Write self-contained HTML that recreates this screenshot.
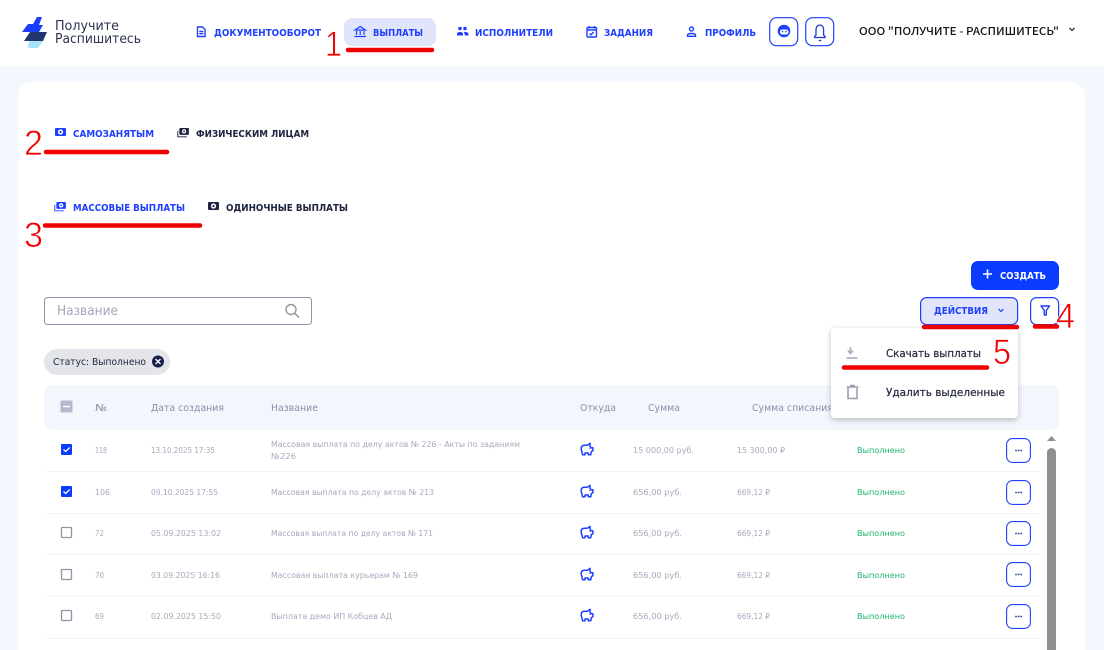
<!DOCTYPE html>
<html lang="ru">
<head>
<meta charset="utf-8">
<title>Выплаты</title>
<style>
html,body{margin:0;padding:0;width:1104px;height:650px;overflow:hidden;background:#f5f7fe}
svg{display:block;font-family:"DejaVu Sans","Liberation Sans",sans-serif}
.nav{font-size:9.500px;font-weight:700;fill:#1f3fff}
.tabd{font-size:9.500px;font-weight:700;fill:#1d2340}
.h{font-size:9.500px;fill:#8a8fa6}
.r{font-size:8.200px;fill:#a6aabc}
.g{font-size:8.200px;fill:#1fb56c}
.red{font-family:"Liberation Sans",sans-serif;font-size:35px;fill:#f00000;stroke:#fff;stroke-width:.7}
.ib{fill:none;stroke:#1f3fff;stroke-width:1.4}
.rl{stroke:#f00000;stroke-width:4.5;stroke-linecap:round}
</style>
</head>
<body>
<svg width="1104" height="650" viewBox="0 0 1104 650" xmlns="http://www.w3.org/2000/svg">
<defs>
<filter id="sh" x="-10%" y="-10%" width="120%" height="125%"><feDropShadow dx="0" dy="2" stdDeviation="3" flood-color="#000" flood-opacity=".25"/></filter>
<symbol id="pig" viewBox="0 0 14 14" overflow="visible"><path d="M1.200 6.500Q1.200 3.200 4.500 3.200H7.500L10 1.300V4.200L11.200 5.700H12.900V8.700L11.300 9.600 10.800 12.700H8.300V11H5V12.700H2.500L2 10Q1.200 8.500 1.200 6.500Z" fill="#fff" stroke="#1f3fff" stroke-width="1.500" stroke-linejoin="round"/><circle cx="10" cy="6.300" r=".7" fill="#1f3fff"/></symbol>
<symbol id="dots" viewBox="0 0 25 25"><rect x=".6" y=".6" width="23.8" height="23.8" rx="6" fill="#fff" stroke="#1f3fff" stroke-width="1.1"/><path d="M9.200 12.500h1.600M11.800 12.500h1.600M14.400 12.500h1.600" stroke="#1f3fa0" stroke-width="1.600"/></symbol>
<symbol id="cash" viewBox="0 0 11 8"><rect width="11" height="8" rx="1"/><circle cx="5.500" cy="4" r="2.600" fill="#fff"/><circle cx="5.500" cy="4" r="1.100"/></symbol>
<symbol id="cashs" viewBox="0 0 13 11"><rect x="2.500" width="10.500" height="7.500" rx="1"/><circle cx="7.700" cy="3.700" r="2.400" fill="#fff"/><circle cx="7.700" cy="3.700" r="1"/><path d="M.7 3v6.600h10" fill="none" stroke="currentColor" stroke-width="1.400"/></symbol>
</defs>

<rect width="1104" height="650" fill="#f5f7fe"/>
<rect width="1104" height="66" fill="#fff"/>
<rect x="18" y="82" width="1067" height="600" rx="14" fill="#fff"/>

<!-- logo -->
<path d="M37 17h5l-3 8h4l-4 7H22l6-8h5z" fill="#1a3dfa"/>
<path d="M30 32h17l-4 9H24z" fill="#24366f"/>
<path d="M29 41h14l-5 7h-10z" fill="#a9e2fb"/>
<text x="55" y="30" font-size="13" fill="#2b3350" textLength="64" lengthAdjust="spacingAndGlyphs">Получите</text>
<text x="55" y="43" font-size="13" fill="#2b3350" textLength="86" lengthAdjust="spacingAndGlyphs">Распишитесь</text>

<!-- nav -->
<rect x="344" y="18" width="92" height="28" rx="8" fill="#e0e5fb"/>
<path d="M197.500 27h5l2.500 2.500V36.500h-7.500z" class="ib"/><path d="M199.300 31.500h4M199.300 33.700h4" class="ib" stroke-width="1"/>
<text x="214" y="36" class="nav" textLength="107" lengthAdjust="spacingAndGlyphs">ДОКУМЕНТООБОРОТ</text>
<path d="M355 30h10.500l-5.250-3.500zM356.500 31v4M360.200 31v4M364 31v4M354.500 36.500h11.500" fill="none" stroke="#1f3fff" stroke-width="1.200"/>
<text x="373" y="36" class="nav" textLength="50" lengthAdjust="spacingAndGlyphs">ВЫПЛАТЫ</text>
<circle cx="460" cy="28.500" r="1.800" fill="#1f3fff"/><circle cx="465" cy="28.500" r="1.800" fill="#1f3fff"/><path d="M457 35.500v-1.500q0-2 3-2t3 2v1.500zM464 32q3.500-.5 4.500 2v1.500H465" fill="#1f3fff"/>
<text x="475" y="36" class="nav" textLength="78" lengthAdjust="spacingAndGlyphs">ИСПОЛНИТЕЛИ</text>
<rect x="587" y="27.500" width="9.500" height="9.500" rx="1" class="ib" stroke-width="1.200"/><path d="M587 30h9.500M589 26v2.500M594.500 26v2.500M589.500 33.500l1.500 1.300 2.600-2.800" class="ib" stroke-width="1"/>
<text x="604" y="36" class="nav" textLength="49" lengthAdjust="spacingAndGlyphs">ЗАДАНИЯ</text>
<circle cx="691.500" cy="29" r="2" class="ib" stroke-width="1.200"/><path d="M687.500 36.300v-1q0-1.800 4-1.800t4 1.800v1z" class="ib" stroke-width="1.200"/>
<text x="705" y="36" class="nav" textLength="51" lengthAdjust="spacingAndGlyphs">ПРОФИЛЬ</text>

<rect x="769.700" y="17.700" width="28" height="28" rx="7" fill="#fff" stroke="#1f3fff" stroke-width="1.200"/>
<circle cx="784" cy="31" r="6.300" fill="#1f3fff"/><rect x="780" y="29.500" width="8.500" height="5" rx="2.300" fill="#fff"/><circle cx="782.500" cy="31.500" r=".8" fill="#1f3fff"/><circle cx="786" cy="31.500" r=".8" fill="#1f3fff"/>
<rect x="805.700" y="17.700" width="28" height="28" rx="7" fill="#fff" stroke="#1f3fff" stroke-width="1.200"/>
<path d="M814.500 37.500v-1l1.500-1.500v-5.500q.2-4 3.800-4.500 3.600.5 3.800 4.500V35l1.500 1.500v1z" fill="none" stroke="#2035d8" stroke-width="1.300"/><path d="M818.700 40.500h2.600" stroke="#2035d8" stroke-width="1.300"/>
<text x="859" y="35" font-size="11" font-weight="500" fill="#141414" style="font-family:'Noto Sans CJK SC','Liberation Sans',sans-serif" textLength="200" lengthAdjust="spacingAndGlyphs">ООО "ПОЛУЧИТЕ - РАСПИШИТЕСЬ"</text>
<path d="M1069.500 28l2.500 2.500 2.500-2.500" fill="none" stroke="#333" stroke-width="1.300"/>

<!-- tabs -->
<use href="#cash" x="55" y="128" width="11" height="8" fill="#1f3fff"/>
<text x="73" y="137" class="nav" textLength="81" lengthAdjust="spacingAndGlyphs">САМОЗАНЯТЫМ</text>
<use href="#cashs" x="177" y="128" width="12" height="10" fill="#1d2340" color="#5a6078"/>
<text x="196" y="137" class="tabd" textLength="113" lengthAdjust="spacingAndGlyphs">ФИЗИЧЕСКИМ ЛИЦАМ</text>
<use href="#cashs" x="54" y="202" width="12" height="10" fill="#1f3fff" color="#5f78ff"/>
<text x="73" y="211" class="nav" textLength="112" lengthAdjust="spacingAndGlyphs">МАССОВЫЕ ВЫПЛАТЫ</text>
<use href="#cash" x="208" y="202" width="11" height="8" fill="#1d2340"/>
<text x="226" y="211" class="tabd" textLength="122" lengthAdjust="spacingAndGlyphs">ОДИНОЧНЫЕ ВЫПЛАТЫ</text>

<!-- create -->
<rect x="971" y="261" width="88" height="29" rx="7" fill="#0a3cff"/>
<path d="M983 274h9M987.500 269.500v9" stroke="#fff" stroke-width="1.600"/>
<text x="1000" y="279" font-size="9.500" font-weight="700" fill="#fff" textLength="46" lengthAdjust="spacingAndGlyphs">СОЗДАТЬ</text>

<!-- search -->
<rect x="44.500" y="297.500" width="267" height="27" rx="3" fill="#fff" stroke="#8f94a8"/>
<text x="57" y="315" font-size="13" fill="#a3a7b9" textLength="61" lengthAdjust="spacingAndGlyphs">Название</text>
<circle cx="291" cy="309.500" r="5" fill="none" stroke="#92969f" stroke-width="1.400"/><path d="M294.500 313l4.500 4.500" stroke="#92969f" stroke-width="1.500"/>

<!-- actions -->
<rect x="920.600" y="297.600" width="97" height="27" rx="6" fill="#e0e5fb" stroke="#1f3fff" stroke-width="1.200"/>
<text x="934" y="314" class="nav" textLength="54" lengthAdjust="spacingAndGlyphs">ДЕЙСТВИЯ</text>
<path d="M998.500 309l2.500 2.500 2.500-2.500" fill="none" stroke="#1f3fff" stroke-width="1.200"/>
<rect x="1030.600" y="297.600" width="28" height="27" rx="6" fill="#fff" stroke="#1f3fff" stroke-width="1.200"/>
<path d="M1041 306h8.500l-3.200 4.500v4.500h-2v-4.500z" fill="none" stroke="#1f3fff" stroke-width="1.400" stroke-linejoin="round"/>

<!-- chip -->
<rect x="44" y="349" width="126" height="26" rx="13" fill="#e4e5ea"/>
<text x="53" y="365" font-size="9.500" fill="#20263f" textLength="93" lengthAdjust="spacingAndGlyphs">Статус: Выполнено</text>
<circle cx="158" cy="361.500" r="6" fill="#161f4a"/><path d="M155.500 359l5 5M160.500 359l-5 5" stroke="#fff" stroke-width="1.300"/>

<!-- table head -->
<rect x="44" y="385" width="1015" height="45" rx="8" fill="#f4f6fe"/>
<rect x="60.500" y="400.500" width="12" height="12" rx="1.500" fill="#b4b9cb"/><path d="M63 406.500h7" stroke="#fff" stroke-width="1.500"/>
<text x="95" y="411" class="h" textLength="12" lengthAdjust="spacingAndGlyphs">№</text>
<text x="151" y="411" class="h" textLength="73" lengthAdjust="spacingAndGlyphs">Дата создания</text>
<text x="271" y="411" class="h" textLength="47" lengthAdjust="spacingAndGlyphs">Название</text>
<text x="580" y="411" class="h" textLength="36" lengthAdjust="spacingAndGlyphs">Откуда</text>
<text x="648" y="411" class="h" textLength="32" lengthAdjust="spacingAndGlyphs">Сумма</text>
<text x="752" y="411" class="h" textLength="81" lengthAdjust="spacingAndGlyphs">Сумма списания</text>

<!-- dividers -->
<path d="M44 471.500H1040M44 513.500H1040M44 554.500H1040M44 596.500H1040M44 638.500H1040" stroke="#f4f5f9"/>

<!-- row 1 -->
<rect x="61" y="444" width="11" height="11" rx="1" fill="#0a3cff"/><path d="M63.500 449.500l2.200 2 4-4" fill="none" stroke="#fff" stroke-width="1.300"/>
<text x="95" y="453" class="r" textLength="12" lengthAdjust="spacingAndGlyphs">118</text>
<text x="151" y="453" class="r" textLength="64" lengthAdjust="spacingAndGlyphs">13.10.2025 17:35</text>
<text x="271" y="447" class="r" textLength="249" lengthAdjust="spacingAndGlyphs">Массовая выплата по делу актов № 226 - Акты по заданиям</text>
<text x="271" y="459" class="r" textLength="25" lengthAdjust="spacingAndGlyphs">№226</text>
<use href="#pig" x="580" y="442" width="14" height="14"/>
<text x="633" y="453" class="r" textLength="61" lengthAdjust="spacingAndGlyphs">15 000,00 руб.</text>
<text x="737" y="453" class="r" textLength="48" lengthAdjust="spacingAndGlyphs">15 300,00 ₽</text>
<text x="857" y="453" class="g" textLength="48" lengthAdjust="spacingAndGlyphs">Выполнено</text>
<use href="#dots" x="1006" y="438" width="25" height="25"/>

<!-- row 2 -->
<rect x="61" y="486" width="11" height="11" rx="1" fill="#0a3cff"/><path d="M63.500 491.500l2.200 2 4-4" fill="none" stroke="#fff" stroke-width="1.300"/>
<text x="95" y="495" class="r" textLength="15" lengthAdjust="spacingAndGlyphs">106</text>
<text x="151" y="495" class="r" textLength="67" lengthAdjust="spacingAndGlyphs">09.10.2025 17:55</text>
<text x="271" y="495" class="r" textLength="163" lengthAdjust="spacingAndGlyphs">Массовая выплата по делу актов № 213</text>
<use href="#pig" x="580" y="484" width="14" height="14"/>
<text x="633" y="495" class="r" textLength="49" lengthAdjust="spacingAndGlyphs">656,00 руб.</text>
<text x="737" y="495" class="r" textLength="33" lengthAdjust="spacingAndGlyphs">669,12 ₽</text>
<text x="857" y="495" class="g" textLength="48" lengthAdjust="spacingAndGlyphs">Выполнено</text>
<use href="#dots" x="1006" y="480" width="25" height="25"/>

<!-- row 3 -->
<rect x="61.500" y="527.500" width="10" height="10" rx="1" fill="#fff" stroke="#8f94a8" stroke-width="1.300"/>
<text x="95" y="536" class="r" textLength="9" lengthAdjust="spacingAndGlyphs">72</text>
<text x="151" y="536" class="r" textLength="70" lengthAdjust="spacingAndGlyphs">05.09.2025 13:02</text>
<text x="271" y="536" class="r" textLength="162" lengthAdjust="spacingAndGlyphs">Массовая выплата по делу актов № 171</text>
<use href="#pig" x="580" y="525" width="14" height="14"/>
<text x="633" y="536" class="r" textLength="49" lengthAdjust="spacingAndGlyphs">656,00 руб.</text>
<text x="737" y="536" class="r" textLength="33" lengthAdjust="spacingAndGlyphs">669,12 ₽</text>
<text x="857" y="536" class="g" textLength="48" lengthAdjust="spacingAndGlyphs">Выполнено</text>
<use href="#dots" x="1006" y="521" width="25" height="25"/>

<!-- row 4 -->
<rect x="61.500" y="569.500" width="10" height="10" rx="1" fill="#fff" stroke="#8f94a8" stroke-width="1.300"/>
<text x="95" y="578" class="r" textLength="9" lengthAdjust="spacingAndGlyphs">70</text>
<text x="151" y="578" class="r" textLength="69" lengthAdjust="spacingAndGlyphs">03.09.2025 16:16</text>
<text x="271" y="578" class="r" textLength="147" lengthAdjust="spacingAndGlyphs">Массовая выплата курьерам № 169</text>
<use href="#pig" x="580" y="567" width="14" height="14"/>
<text x="633" y="578" class="r" textLength="49" lengthAdjust="spacingAndGlyphs">656,00 руб.</text>
<text x="737" y="578" class="r" textLength="33" lengthAdjust="spacingAndGlyphs">669,12 ₽</text>
<text x="857" y="578" class="g" textLength="48" lengthAdjust="spacingAndGlyphs">Выполнено</text>
<use href="#dots" x="1006" y="562" width="25" height="25"/>

<!-- row 5 -->
<rect x="61.500" y="610.500" width="10" height="10" rx="1" fill="#fff" stroke="#8f94a8" stroke-width="1.300"/>
<text x="95" y="619" class="r" textLength="9" lengthAdjust="spacingAndGlyphs">69</text>
<text x="151" y="619" class="r" textLength="70" lengthAdjust="spacingAndGlyphs">02.09.2025 15:50</text>
<text x="271" y="619" class="r" textLength="121" lengthAdjust="spacingAndGlyphs">Выплата демо ИП Кобцев АД</text>
<use href="#pig" x="580" y="608" width="14" height="14"/>
<text x="633" y="619" class="r" textLength="49" lengthAdjust="spacingAndGlyphs">656,00 руб.</text>
<text x="737" y="619" class="r" textLength="33" lengthAdjust="spacingAndGlyphs">669,12 ₽</text>
<text x="857" y="619" class="g" textLength="48" lengthAdjust="spacingAndGlyphs">Выполнено</text>
<use href="#dots" x="1006" y="604" width="25" height="25"/>

<!-- scrollbar -->
<path d="M1047 441l4.500-5 4.500 5z" fill="#8f8f8f"/>
<rect x="1047" y="448" width="9" height="220" rx="4.500" fill="#8f8f8f"/>

<!-- dropdown -->
<rect x="831" y="328" width="187" height="90" rx="4" fill="#fff" filter="url(#sh)"/>
<path d="M850.500 347v5M848 350.500l2.500 3 2.500-3M846.500 358h11" fill="none" stroke="#aeb2c2" stroke-width="1.800"/>
<path d="M848 388v10.500h9V388M846.500 387h12M850 385.500h5" fill="none" stroke="#9a9eb0" stroke-width="1.600"/>
<text x="886" y="357" font-size="10.500" fill="#23283f" stroke="#23283f" stroke-width=".2" textLength="95" lengthAdjust="spacingAndGlyphs">Скачать выплаты</text>
<text x="886" y="396" font-size="10.500" fill="#23283f" stroke="#23283f" stroke-width=".2" textLength="119" lengthAdjust="spacingAndGlyphs">Удалить выделенные</text>

<!-- red annotations -->
<path class="rl" d="M348 50H432M46 152H167M45 225.500H200M924 327H1017M1035 326.500H1057M844 367.500H987"/>
<text x="325" y="56" class="red" textLength="17" lengthAdjust="spacingAndGlyphs">1</text>
<text x="24" y="155" class="red" textLength="19" lengthAdjust="spacingAndGlyphs">2</text>
<text x="24" y="247" class="red" textLength="19" lengthAdjust="spacingAndGlyphs">3</text>
<text x="1056" y="328" class="red" textLength="19" lengthAdjust="spacingAndGlyphs">4</text>
<text x="993" y="364" class="red" textLength="18" lengthAdjust="spacingAndGlyphs">5</text>
</svg>
</body>
</html>
